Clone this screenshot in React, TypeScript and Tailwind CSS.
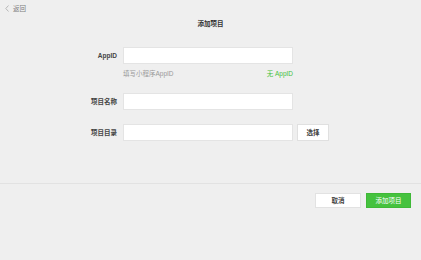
export default function App() {
  const font = { fontFamily: '"Liberation Sans", "Noto Sans CJK SC", sans-serif' }
  return (
    <div className="h-[260px] w-full bg-[#efefef] text-[#353535]" style={font}>
      <div className="flex h-[9px] items-center gap-[4px] pl-[5px] pt-[4px] box-content">
        <svg width="4" height="7" viewBox="0 0 4 7" className="text-[#aaaaaa]">
          <path d="M3.5 0.5 L0.8 3.5 L3.5 6.5" fill="none" stroke="currentColor" strokeWidth="0.8" />
        </svg>
        <span className="text-[6.5px] leading-[9px] text-[#7d7d7d]">返回</span>
      </div>

      <div className="mt-[7px] text-center text-[6.5px] font-bold leading-[8px] text-[#333333]">添加项目</div>

      <div className="mt-[19px] flex flex-col">
        <div className="flex items-center">
          <label className="w-[123px] pr-[6px] text-right text-[6.5px] font-bold text-[#444444]">AppID</label>
          <div className="h-[17px] w-[170px] border border-[#e4e4e4] bg-white" />
        </div>
        <div className="mt-[6px] flex h-[7px] w-[293px] items-center justify-between pl-[123px] text-[6.5px] leading-[7px]">
          <span className="text-[#999999]">填写小程序AppID</span>
          <span className="text-[#45c23e]">无 AppID</span>
        </div>

        <div className="mt-[16px] flex items-center">
          <label className="w-[123px] pr-[6px] text-right text-[6.5px] font-bold text-[#444444]">项目名称</label>
          <div className="h-[17px] w-[170px] border border-[#e4e4e4] bg-white" />
        </div>

        <div className="mt-[14px] flex items-center">
          <label className="w-[123px] pr-[6px] text-right text-[6.5px] font-bold text-[#444444]">项目目录</label>
          <div className="h-[17px] w-[170px] border border-[#e4e4e4] bg-white" />
          <button className="ml-[4px] flex h-[17px] w-[32px] items-center justify-center border border-[#e0e0e0] bg-white text-[6.5px] font-bold text-[#444444]">
            选择
          </button>
        </div>
      </div>

      <div className="mt-[42px] h-px w-full bg-[#e2e2e2]" />

      <div className="mt-[9px] flex justify-end gap-[5px] pr-[10px]">
        <button className="flex h-[15px] w-[46px] items-center justify-center border border-[#e2e2e2] bg-white text-[6.5px] font-bold text-[#444444]">
          取消
        </button>
        <button className="flex h-[15px] w-[45px] items-center justify-center border border-[#3fb837] bg-[#45c23e] text-[6.5px] text-white">
          添加项目
        </button>
      </div>
    </div>
  )
}
